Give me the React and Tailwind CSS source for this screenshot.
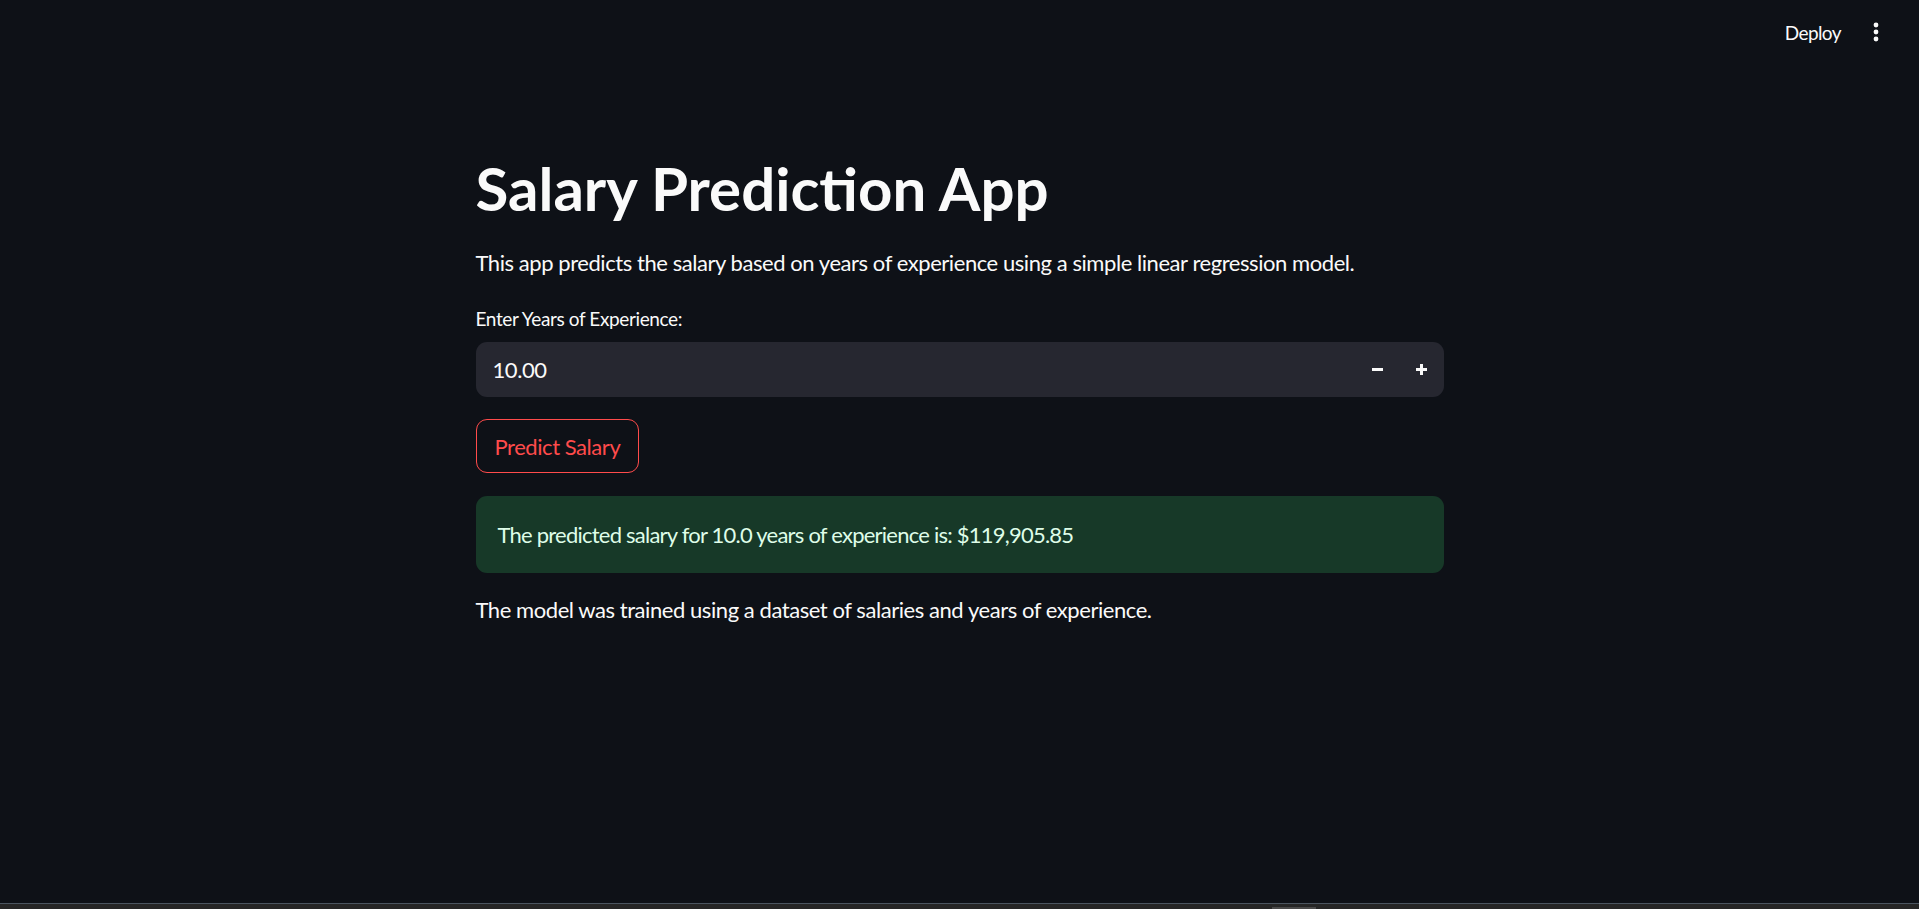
const fontStack = { fontFamily: 'Lato, "Liberation Sans", sans-serif' };

function MoreIcon() {
  return (
    <svg width="6" height="20" viewBox="0 0 6 20" fill="#fafafa">
      <circle cx="3" cy="3" r="2.4" />
      <circle cx="3" cy="10" r="2.4" />
      <circle cx="3" cy="17" r="2.4" />
    </svg>
  );
}

export default function App() {
  return (
    <div className="relative flex h-[909px] w-full flex-col overflow-hidden bg-[#0e1117] text-[#fafafa]" style={fontStack}>
      <header className="flex h-[64px] items-center justify-end gap-[30px] pr-[38px]">
        <button className="text-[19px] leading-none tracking-[-0.03em] text-[#fafafa]">Deploy</button>
        <button className="flex h-[24px] w-[10px] items-center justify-center">
          <MoreIcon />
        </button>
      </header>

      <main className="mx-auto flex w-[968px] flex-1 flex-col pt-[88px]">
        <h1 className="text-[60px] font-bold leading-[72px]">Salary Prediction App</h1>
        <p className="mt-[22px] text-[22px] leading-[34px] tracking-[-0.02em]">
          This app predicts the salary based on years of experience using a simple linear regression model.
        </p>

        <label className="mt-[26px] text-[19px] leading-[26px] tracking-[-0.02em]">Enter Years of Experience:</label>
        <div className="mt-[10px] flex h-[55px] items-center rounded-[11px] bg-[#262730] pl-[17px] pr-[7px]">
          <span className="flex-1 text-[22px] tracking-[-0.02em]">10.00</span>
          <button className="flex h-[30px] w-[30px] items-center justify-center">
            <span className="block h-[3px] w-[11px] bg-[#fafafa]" />
          </button>
          <button className="ml-[14px] flex h-[30px] w-[30px] items-center justify-center">
            <span className="relative block h-[11px] w-[11px]">
              <span className="absolute left-0 top-[4px] block h-[3px] w-[11px] bg-[#fafafa]" />
              <span className="absolute left-[4px] top-0 block h-[11px] w-[3px] bg-[#fafafa]" />
            </span>
          </button>
        </div>

        <div className="mt-[22px]">
          <button className="h-[54px] rounded-[11px] border border-[#ff4b4b] px-[18px] text-[22px] tracking-[-0.02em] text-[#ff4b4b]">
            Predict Salary
          </button>
        </div>

        <div className="mt-[23px] flex h-[77px] items-center rounded-[11px] bg-[#173928] px-[22px] text-[22px] tracking-[-0.035em] text-[#dffde9]">
          The predicted salary for 10.0 years of experience is: $119,905.85
        </div>

        <p className="mt-[20px] text-[22px] leading-[34px] tracking-[-0.02em]">
          The model was trained using a dataset of salaries and years of experience.
        </p>
      </main>

      <div className="h-[6px] w-full border-t border-[#4b5560] bg-[#262626]">
        <div className="ml-[1272px] mt-[3px] h-[2px] w-[44px] bg-[#4a4a4a]" />
      </div>
    </div>
  );
}
